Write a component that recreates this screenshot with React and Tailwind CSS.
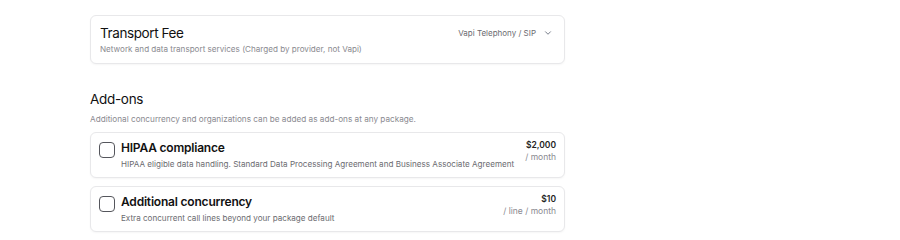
import React from "react";

function Chevron() {
  return (
    <svg width="10" height="10" viewBox="0 0 24 24" fill="none" stroke="#6b7280" strokeWidth="2.2" strokeLinecap="round" strokeLinejoin="round">
      <path d="m6 9 6 6 6-6" />
    </svg>
  );
}

function AddonCard({ title, desc, price, unit }) {
  return (
    <div className="flex h-[46px] items-start justify-between rounded-[6px] border border-[#e8e8ea] bg-white pl-[8px] pr-[8px] pt-[7px] shadow-[0_1px_2px_rgba(0,0,0,0.04)]">
      <div className="flex items-start gap-[6px]">
        <div className="mt-[2px] h-[16px] w-[16px] shrink-0 rounded-[4px] border-[1.5px] border-[#55565c] bg-white" />
        <div className="flex flex-col">
          <div className="whitespace-nowrap text-[12px] font-semibold leading-[16px] tracking-[-0.2px] text-[#111]">{title}</div>
          <div className="mt-[2px] whitespace-nowrap text-[8.1px] leading-[12px] text-[#6b6b70]">{desc}</div>
        </div>
      </div>
      <div className="-mt-[1px] flex shrink-0 flex-col items-end">
        <div className="whitespace-nowrap text-[8.5px] font-semibold leading-[12px] text-[#222]">{price}</div>
        <div className="whitespace-nowrap text-[8.5px] leading-[12px] text-[#8a8a90]">{unit}</div>
      </div>
    </div>
  );
}

export default function App() {
  return (
    <div className="h-[240px] w-[900px] overflow-hidden bg-white" style={{ fontFamily: "Inter, 'Noto Sans', sans-serif" }}>
      <div className="ml-[90px] w-[475px] pt-[15px]">
        <div className="flex h-[49px] items-start justify-between rounded-[6px] border border-[#e8e8ea] bg-white pl-[9px] pr-[11px] pt-[8px] shadow-[0_1px_2px_rgba(0,0,0,0.04)]">
          <div className="flex flex-col">
            <div className="whitespace-nowrap text-[13.5px] leading-[18px] tracking-[-0.4px] text-[#111]">Transport Fee</div>
            <div className="mt-[1px] whitespace-nowrap text-[8.1px] leading-[12px] text-[#8a8a90]">Network and data transport services (Charged by provider, not Vapi)</div>
          </div>
          <div className="mt-[3px] flex items-center gap-[7px]">
            <span className="whitespace-nowrap text-[8px] leading-[12px] text-[#6b6b70]">Vapi Telephony / SIP</span>
            <Chevron />
          </div>
        </div>

        <div className="mt-[26px] text-[13.5px] leading-[18px] tracking-[-0.3px] text-[#111]">Add-ons</div>
        <div className="mt-[5px] whitespace-nowrap text-[8.2px] leading-[12px] text-[#8a8a90]">Additional concurrency and organizations can be added as add-ons at any package.</div>

        <div className="mt-[7px] flex flex-col gap-[8px]">
          <AddonCard
            title="HIPAA compliance"
            desc="HIPAA eligible data handling. Standard Data Processing Agreement and Business Associate Agreement"
            price="$2,000"
            unit="/ month"
          />
          <AddonCard
            title="Additional concurrency"
            desc="Extra concurrent call lines beyond your package default"
            price="$10"
            unit="/ line / month"
          />
          <div className="h-[46px] rounded-[6px] border border-[#e8e8ea] bg-white shadow-[0_1px_2px_rgba(0,0,0,0.04)]" />
        </div>
      </div>
    </div>
  );
}
